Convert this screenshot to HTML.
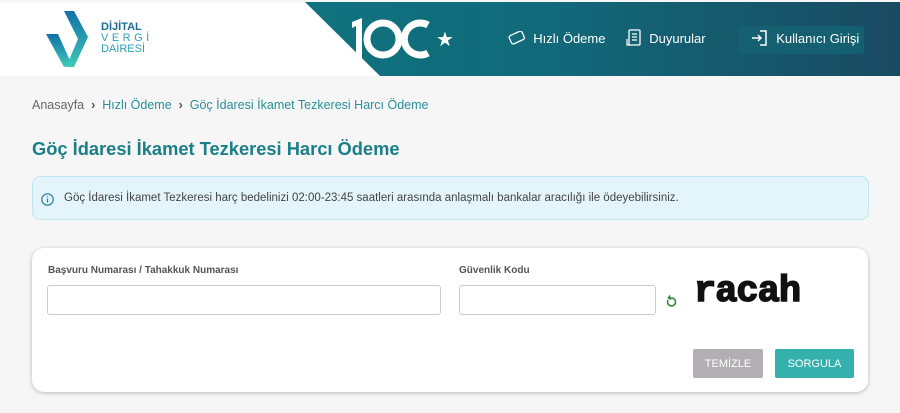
<!DOCTYPE html>
<html><head><meta charset="utf-8"><style>
*{margin:0;padding:0;box-sizing:border-box}
body{width:900px;height:413px;overflow:hidden;background:#f6f6f6;font-family:"Liberation Sans",Arial,sans-serif;position:relative}
.hdr{position:absolute;left:0;top:2px;width:900px;height:74px;background:#fff}
.teal{position:absolute;left:0;top:2px;width:900px;height:74px;background:linear-gradient(90deg,#0e7e85 0%,#116a7a 60%,#1a4a62 100%);clip-path:polygon(305px 0,900px 0,900px 74px,380px 74px)}
.nav{position:absolute;top:0;height:76px;display:flex;align-items:center;color:#fff;font-size:13px}
.bc{position:absolute;left:32px;top:98px;font-size:12.5px;color:#666}
.bc span{color:#2a8f99}
h1{position:absolute;left:32px;top:138px;font-size:18.3px;color:#1a7f87;font-weight:bold}
.info{position:absolute;left:32px;top:176px;width:837px;height:44px;background:#e3f5fb;border:1px solid #bfe6f2;border-radius:8px;font-size:11.5px;color:#444;padding:15px 0 0 31px}
.card{position:absolute;left:32px;top:248px;width:836px;height:144px;background:#fff;border-radius:12px;box-shadow:0 1px 4px rgba(0,0,0,.25)}
.lbl{position:absolute;font-size:10px;color:#555;font-weight:bold}
.inp{position:absolute;border:1px solid #ccc;border-radius:3px;height:30px;background:#fff}
.btn{position:absolute;top:349px;height:29px;color:#fff;font-size:11px;display:flex;align-items:center;justify-content:center;border-radius:2px}
</style></head><body>
<div class="hdr"></div>
<div class="teal"></div>
<svg style="position:absolute;left:44px;top:9px" width="50" height="58" viewBox="0 0 50 58">
<defs><linearGradient id="g" x1="0" y1="0" x2="0" y2="1"><stop offset="0" stop-color="#1270a8"/><stop offset="1" stop-color="#3ec9b8"/></linearGradient></defs>
<path d="M2 25 L14 25 L28 56 L20 58 Z" fill="url(#g)"/><path d="M20 2 L30 2 L44 28 L30 58 L22 58 L34 30 Z" fill="url(#g)"/></svg>
<div style="position:absolute;left:101px;top:22px;font-size:11px;font-weight:bold;color:#1a6d96;line-height:11px">DİJİTAL<br><span style="font-weight:normal;letter-spacing:3.5px;color:#2aa3b5">VERGİ</span><br><span style="font-weight:normal;color:#2aa3b5">DAİRESİ</span></div>
<svg style="position:absolute;left:348px;top:16px" width="110" height="46" viewBox="0 0 110 46">
<path d="M4 6 L14 2 L14 44 L8 44 L8 10 L4 12 Z" fill="#fff"/>
<circle cx="35" cy="23" r="16" fill="none" stroke="#fff" stroke-width="7"/>
<path d="M80 9 A16 16 0 1 0 80 37" fill="none" stroke="#fff" stroke-width="7"/>
<text x="88" y="30" font-size="20" fill="#fff" font-family="DejaVu Sans">★</text>
</svg>
<div class="nav" style="left:508px"><svg width="18" height="14" viewBox="0 0 18 14"><rect x="2" y="2" width="14" height="9" rx="2" transform="rotate(-25 9 7)" fill="none" stroke="#fff" stroke-width="1.3"/></svg>&nbsp;&nbsp;Hızlı Ödeme</div>
<div class="nav" style="left:626px"><svg width="16" height="18" viewBox="0 0 16 18"><rect x="3" y="1" width="11" height="15" rx="1" fill="none" stroke="#fff" stroke-width="1.3"/><path d="M6 5h5M6 8h5M6 11h5M1 10v6h3" stroke="#fff" fill="none" stroke-width="1.2"/></svg>&nbsp;&nbsp;Duyurular</div>
<div style="position:absolute;left:739px;top:26px;width:125px;height:28px;background:#145f70;border-radius:3px"></div>
<div class="nav" style="left:751px"><svg width="18" height="16" viewBox="0 0 18 16"><path d="M9 1h6v14H9M1 8h9M7 5l3 3-3 3" stroke="#fff" fill="none" stroke-width="1.5"/></svg>&nbsp;&nbsp;Kullanıcı Girişi</div>
<div class="bc">Anasayfa &nbsp;<b style="color:#555">›</b>&nbsp; <span>Hızlı Ödeme</span> &nbsp;<b style="color:#555">›</b>&nbsp; <span>Göç İdaresi İkamet Tezkeresi Harcı Ödeme</span></div>
<h1>Göç İdaresi İkamet Tezkeresi Harcı Ödeme</h1>
<div class="info"><svg style="position:absolute;left:8px;top:16px" width="13" height="13" viewBox="0 0 13 13"><circle cx="6.5" cy="6.5" r="5.7" fill="none" stroke="#2a7f9f" stroke-width="1.2"/><path d="M6.5 5.5v4M6.5 3.3v1" stroke="#2a7f9f" stroke-width="1.3"/></svg>Göç İdaresi İkamet Tezkeresi harç bedelinizi 02:00-23:45 saatleri arasında anlaşmalı bankalar aracılığı ile ödeyebilirsiniz.</div>
<div class="card"></div>
<div class="lbl" style="left:48px;top:265px">Başvuru Numarası / Tahakkuk Numarası</div>
<div class="inp" style="left:47px;top:285px;width:394px"></div>
<div class="lbl" style="left:459px;top:265px">Güvenlik Kodu</div>
<div class="inp" style="left:459px;top:285px;width:197px"></div>
<svg style="position:absolute;left:665px;top:294px" width="13" height="14" viewBox="0 0 13 14"><path d="M3 6a4 4 0 1 0 4-2H4M5 1.5L3.5 4 6 5.5" fill="none" stroke="#2f8a3a" stroke-width="1.6"/></svg>
<div style="position:absolute;left:694px;top:270px;font-family:'Liberation Mono',monospace;font-size:37px;font-weight:bold;color:#111;letter-spacing:-1px;line-height:44px;-webkit-text-stroke:1.5px #111">racah</div>
<div class="btn" style="left:693px;width:70px;background:#b3aeb3">TEMİZLE</div>
<div class="btn" style="left:775px;width:79px;background:#35b1ad">SORGULA</div>
</body></html>
